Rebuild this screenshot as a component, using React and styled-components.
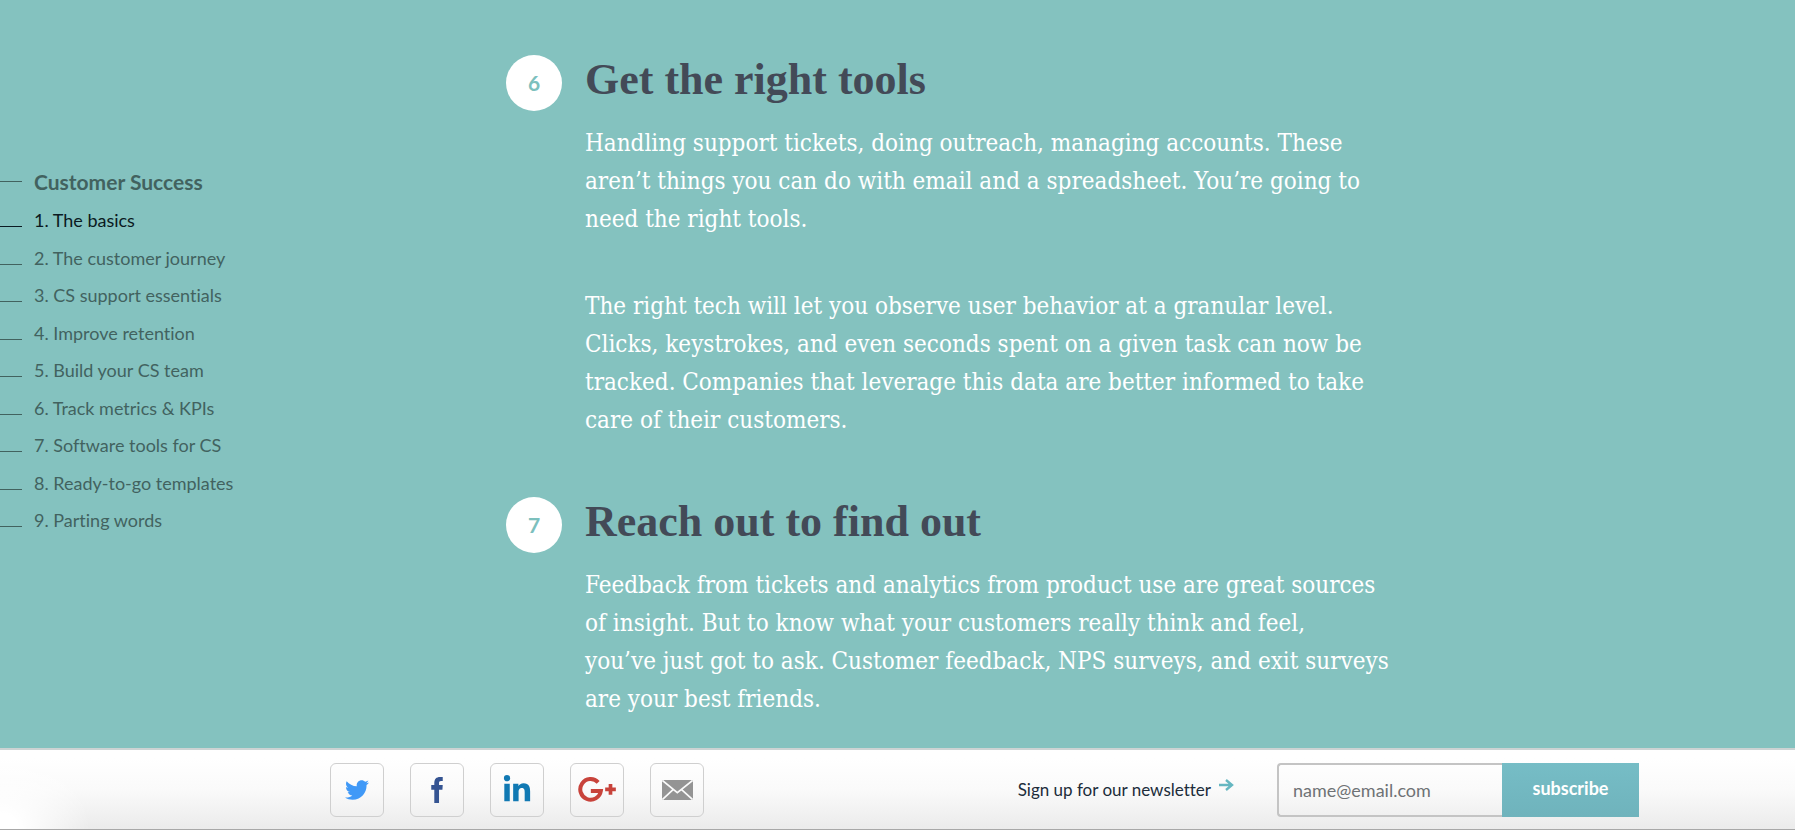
import React from "react";
import styled, { createGlobalStyle } from "styled-components";
import { FaTwitter, FaLinkedinIn } from "react-icons/fa";

const chapters = [
  "1. The basics",
  "2. The customer journey",
  "3. CS support essentials",
  "4. Improve retention",
  "5. Build your CS team",
  "6. Track metrics & KPIs",
  "7. Software tools for CS",
  "8. Ready-to-go templates",
  "9. Parting words",
];

const tips = [
  {
    number: 6,
    title: "Get the right tools",
    paragraphs: [
      "Handling support tickets, doing outreach, managing accounts. These aren’t things you can do with email and a spreadsheet. You’re going to need the right tools.",
      "The right tech will let you observe user behavior at a granular level. Clicks, keystrokes, and even seconds spent on a given task can now be tracked. Companies that leverage this data are better informed to take care of their customers.",
    ],
  },
  {
    number: 7,
    title: "Reach out to find out",
    paragraphs: [
      "Feedback from tickets and analytics from product use are great sources of insight. But to know what your customers really think and feel,\nyou’ve just got to ask. Customer feedback, NPS surveys, and exit surveys are your best friends.",
    ],
  },
];

export default function App() {
  return (
    <Page>
      <GlobalStyle />
      <Content>
        <SideNav aria-label="Chapters">
          <NavTitle href="#top">Customer Success</NavTitle>
          <NavList>
            {chapters.map((chapter, index) => (
              <li key={chapter}>
                <NavLink href={`#chapter-${index + 1}`} $active={index === 0}>
                  {chapter}
                </NavLink>
              </li>
            ))}
          </NavList>
        </SideNav>
        <Article>
          {tips.map((tip) => (
            <Tip key={tip.number}>
              <Badge>{tip.number}</Badge>
              <TipBody>
                <TipTitle>{tip.title}</TipTitle>
                {tip.paragraphs.map((text) => (
                  <Paragraph key={text}>{text}</Paragraph>
                ))}
              </TipBody>
            </Tip>
          ))}
        </Article>
      </Content>
      <Footer>
        <Socials>
          <SocialLink href="#twitter" aria-label="Twitter" $color="#4099f7">
            <FaTwitter size={24} />
          </SocialLink>
          <SocialLink href="#facebook" aria-label="Facebook" $color="#355492">
            <FacebookIcon />
          </SocialLink>
          <SocialLink href="#linkedin" aria-label="LinkedIn" $color="#1179b3">
            <FaLinkedinIn size={30} />
          </SocialLink>
          <SocialLink href="#google-plus" aria-label="Google Plus" $color="#c8433b">
            <GooglePlusIcon />
          </SocialLink>
          <SocialLink href="#email" aria-label="Email" $color="#949494">
            <MailIcon />
          </SocialLink>
        </Socials>
        <Newsletter onSubmit={(e) => e.preventDefault()}>
          <NewsletterLabel htmlFor="email">
            Sign up for our newsletter
            <ArrowIcon />
          </NewsletterLabel>
          <EmailInput id="email" type="email" placeholder="name@email.com" />
          <SubscribeButton type="submit">subscribe</SubscribeButton>
        </Newsletter>
      </Footer>
    </Page>
  );
}

function FacebookIcon() {
  return (
    <svg width="12" height="26" viewBox="0 0 34 77" fill="currentColor">
      <path d="M9 77V38H0V24H9V18C9 6 15 0 26 0H34V12H29C24 12 23 14 23 18V24H34L33 38H23V77Z" />
    </svg>
  );
}

function GooglePlusIcon() {
  return (
    <svg width="38" height="25" viewBox="0 0 113 75" fill="none" stroke="currentColor">
      <path d="M60 16A31 31 0 1 0 68 42H38" strokeWidth="12" />
      <path d="M81 37H113M97 21V53" strokeWidth="11" />
    </svg>
  );
}

function MailIcon() {
  return (
    <svg width="31" height="20" viewBox="0 0 93 60">
      <path d="M0 0H93V60H0Z" fill="currentColor" />
      <path d="M1 1L46 38L92 1M1 59L34 28M92 59L58 28" fill="none" stroke="#fafafa" strokeWidth="5" />
    </svg>
  );
}

function ArrowIcon() {
  return (
    <Arrow width="15" height="12" viewBox="0 0 15 12" fill="none" stroke="#65b7c1" strokeWidth="2.4">
      <path d="M0 6H13M7 1L13 6L7 11" />
    </Arrow>
  );
}

const GlobalStyle = createGlobalStyle`
  * {
    box-sizing: border-box;
  }

  body {
    margin: 0;
    background: #84c2bf;
    font-family: Lato, "Liberation Sans", sans-serif;
    font-variant-ligatures: none;
  }
`;

const Page = styled.div`
  display: flex;
  flex-direction: column;
  height: 100vh;
  overflow: hidden;
`;

const Content = styled.main`
  flex: 1;
  min-height: 0;
  display: grid;
  grid-template-columns: 506px 1fr;
  overflow: hidden;
`;

const SideNav = styled.nav`
  padding-top: 161px;
`;

const NavTitle = styled.a`
  display: flex;
  align-items: center;
  gap: 12px;
  color: #42625f;
  font-size: 21px;
  font-weight: 700;
  line-height: 41px;
  text-decoration: none;

  &::before {
    content: "";
    width: 22px;
    height: 1px;
    background: #42625f;
  }
`;

const NavList = styled.ul`
  display: grid;
  grid-auto-rows: 1fr;
  height: 338px;
  margin: 0;
  padding: 0;
  list-style: none;
`;

const NavLink = styled.a`
  display: flex;
  align-items: baseline;
  gap: 12px;
  color: ${({ $active }) => ($active ? "#0b1a22" : "#42625f")};
  font-size: 18px;
  line-height: 36px;
  text-decoration: none;

  &::before {
    content: "";
    width: 22px;
    height: 1px;
    background: currentColor;
  }
`;

const Article = styled.article`
  padding-top: 55px;
  padding-right: 32px;
`;

const Tip = styled.section`
  display: flex;
  align-items: flex-start;
  gap: 23px;
  margin-bottom: 9px;
`;

const Badge = styled.span`
  display: flex;
  align-items: center;
  justify-content: center;
  flex: none;
  width: 56px;
  height: 56px;
  padding-bottom: 2px;
  border-radius: 50%;
  background: #fff;
  color: #7cc0bd;
  font-size: 21px;
  font-weight: 700;
`;

const TipBody = styled.div`
  max-width: 816px;
`;

const TipTitle = styled.h2`
  margin: 0 0 19px;
  color: #434a57;
  font-family: "Liberation Serif", serif;
  font-size: 44px;
  font-weight: 700;
  line-height: 50px;
`;

const Paragraph = styled.p`
  margin: 0 0 49px;
  color: #fff;
  font-family: "DejaVu Serif Condensed", "DejaVu Serif", serif;
  font-size: 24px;
  line-height: 38px;
  white-space: pre-line;
`;

const Footer = styled.footer`
  display: flex;
  align-items: center;
  justify-content: space-between;
  height: 82px;
  padding: 0 156px 0 330px;
  border-top: 2px solid #ccd3d3;
  border-bottom: 1px solid #a8a8a8;
  background:
    radial-gradient(ellipse 90px 80px at 0 100%, #fff 20%, transparent),
    linear-gradient(#fff 10%, #fafafa 50%, #ebebeb);
`;

const Socials = styled.div`
  display: flex;
  gap: 26px;
`;

const SocialLink = styled.a`
  display: flex;
  align-items: center;
  justify-content: center;
  width: 54px;
  height: 54px;
  border: 1px solid #cfcfcf;
  border-radius: 6px;
  color: ${({ $color }) => $color};
`;

const Newsletter = styled.form`
  display: flex;
  align-items: center;
`;

const NewsletterLabel = styled.label`
  display: flex;
  align-items: center;
  gap: 8px;
  margin-right: 43px;
  color: #202c3a;
  font-size: 17px;
`;

const Arrow = styled.svg`
  margin-bottom: 9px;
`;

const EmailInput = styled.input`
  width: 225px;
  height: 54px;
  padding: 0 14px;
  border: 2px solid #c4c4c4;
  border-right: 0;
  border-radius: 4px 0 0 4px;
  background: transparent;
  font-family: inherit;
  font-size: 18px;
  outline: none;

  &::placeholder {
    color: #6f7275;
  }
`;

const SubscribeButton = styled.button`
  width: 137px;
  height: 54px;
  padding: 0 0 4px;
  border: 0;
  background: linear-gradient(#76bdc6, #6fb3bc);
  color: #fff;
  font-family: inherit;
  font-size: 18px;
  font-weight: 700;
`;
